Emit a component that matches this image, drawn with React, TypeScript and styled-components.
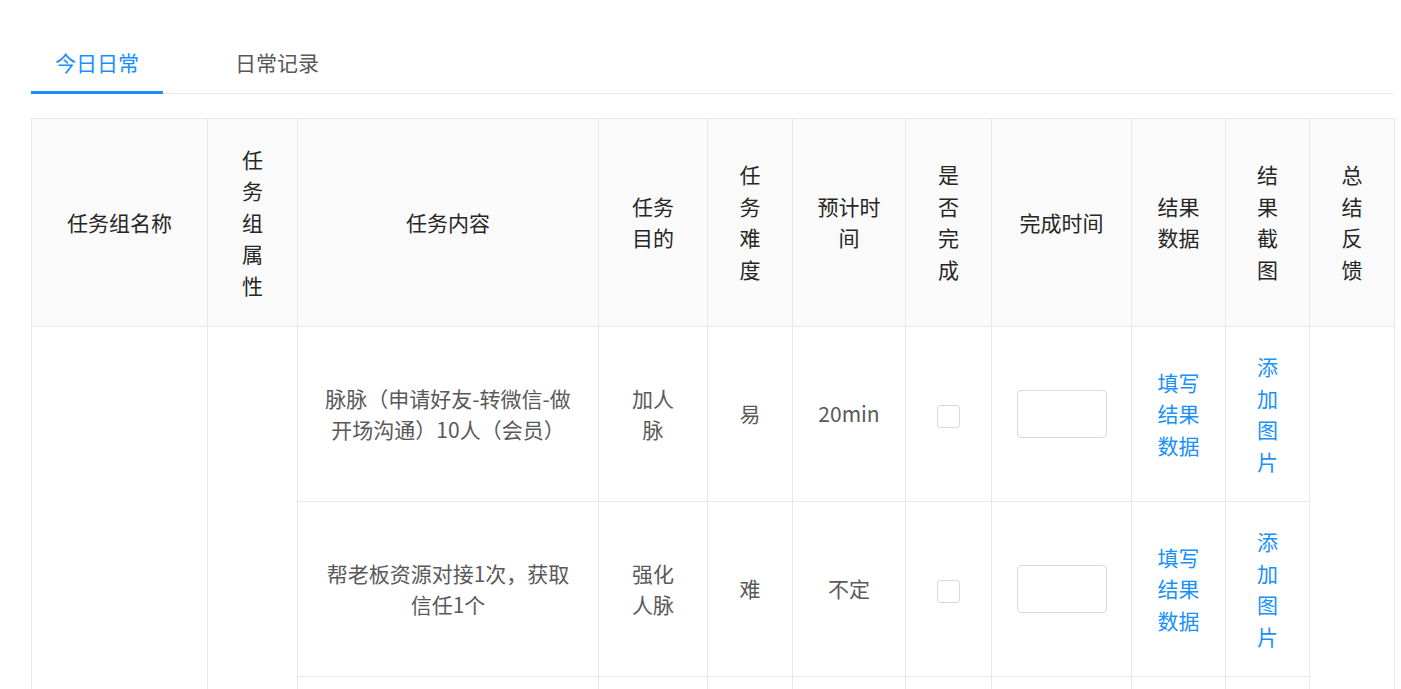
import React from "react";
import styled, { createGlobalStyle } from "styled-components";

const Global = createGlobalStyle`
  html, body { margin: 0; padding: 0; background: #fff; }
  body { font-family: "Noto Sans CJK SC", "Noto Sans", sans-serif; }
`;

const Page = styled.div`
  padding: 26px 7px 0 31px;
`;

const TabBar = styled.div`
  display: flex;
  border-bottom: 1px solid #e8e8e8;
  margin-bottom: 24px;
`;

const Tab = styled.div<{ $active?: boolean }>`
  position: relative;
  padding: 21px 24px 14px;
  margin-right: 48px;
  font-size: 21px;
  line-height: 31.5px;
  color: ${(p) => (p.$active ? "#1890ff" : "#595959")};
  cursor: pointer;
  &::after {
    content: "";
    display: ${(p) => (p.$active ? "block" : "none")};
    position: absolute;
    left: 0;
    right: 0;
    bottom: -1px;
    height: 3px;
    background: #1890ff;
  }
`;

const Table = styled.table`
  width: 1364px;
  table-layout: fixed;
  border-collapse: separate;
  border-spacing: 0;
  border-top: 1px solid #e8e8e8;
  border-left: 1px solid #e8e8e8;
  font-size: 21px;
  line-height: 31.5px;
`;

const Th = styled.th`
  background: #fafafa;
  color: #262626;
  font-weight: 400;
  text-align: center;
  vertical-align: middle;
  padding: 25px 0;
  border-right: 1px solid #e8e8e8;
  border-bottom: 1px solid #e8e8e8;
`;

const Td = styled.td`
  color: #595959;
  text-align: center;
  vertical-align: middle;
  padding: 24px 0;
  border-right: 1px solid #e8e8e8;
  border-bottom: 1px solid #e8e8e8;
`;

const Line = styled.span`
  display: block;
  white-space: nowrap;
`;

const LinkText = styled.a`
  display: block;
  color: #1890ff;
  text-decoration: none;
  cursor: pointer;
`;

const Check = styled.span`
  display: inline-block;
  width: 21px;
  height: 21px;
  border: 1px solid #d9d9d9;
  border-radius: 3px;
  background: #fff;
  vertical-align: middle;
`;

const TimeInput = styled.input`
  box-sizing: border-box;
  width: 90px;
  height: 48px;
  border: 1px solid #d9d9d9;
  border-radius: 4px;
  background: #fff;
  outline: none;
  vertical-align: middle;
`;

const Lines = ({ items }: { items: string[] }) => (
  <>
    {items.map((t, i) => (
      <Line key={i}>{t}</Line>
    ))}
  </>
);

const Links = ({ items }: { items: string[] }) => (
  <>
    {items.map((t, i) => (
      <LinkText key={i}>{t}</LinkText>
    ))}
  </>
);

const widths = [176, 90, 301, 109, 85, 113, 86, 140, 94, 84, 85];

const headers: string[][] = [
  ["任务组名称"],
  ["任", "务", "组", "属", "性"],
  ["任务内容"],
  ["任务", "目的"],
  ["任", "务", "难", "度"],
  ["预计时", "间"],
  ["是", "否", "完", "成"],
  ["完成时间"],
  ["结果", "数据"],
  ["结", "果", "截", "图"],
  ["总", "结", "反", "馈"],
];

type Task = { content: string[]; goal: string[]; level: string; time: string };

const tasks: Task[] = [
  {
    content: ["脉脉（申请好友-转微信-做", "开场沟通）10人（会员）"],
    goal: ["加人", "脉"],
    level: "易",
    time: "20min",
  },
  {
    content: ["帮老板资源对接1次，获取", "信任1个"],
    goal: ["强化", "人脉"],
    level: "难",
    time: "不定",
  },
  {
    content: ["朋友圈发布行业动态3条"],
    goal: ["维护", "人脉"],
    level: "易",
    time: "10min",
  },
];

export default function App() {
  return (
    <Page>
      <Global />
      <TabBar>
        <Tab $active>今日日常</Tab>
        <Tab>日常记录</Tab>
      </TabBar>
      <Table>
        <colgroup>
          {widths.map((w, i) => (
            <col key={i} style={{ width: w }} />
          ))}
        </colgroup>
        <thead>
          <tr>
            {headers.map((h, i) => (
              <Th key={i}>
                <Lines items={h} />
              </Th>
            ))}
          </tr>
        </thead>
        <tbody>
          {tasks.map((t, i) => (
            <tr key={i}>
              {i === 0 && <Td rowSpan={tasks.length} />}
              {i === 0 && <Td rowSpan={tasks.length} />}
              <Td>
                <Lines items={t.content} />
              </Td>
              <Td>
                <Lines items={t.goal} />
              </Td>
              <Td>{t.level}</Td>
              <Td>{t.time}</Td>
              <Td>
                <Check />
              </Td>
              <Td>
                <TimeInput readOnly />
              </Td>
              <Td>
                <Links items={["填写", "结果", "数据"]} />
              </Td>
              <Td>
                <Links items={["添", "加", "图", "片"]} />
              </Td>
              {i === 0 && <Td rowSpan={tasks.length} />}
            </tr>
          ))}
        </tbody>
      </Table>
    </Page>
  );
}
